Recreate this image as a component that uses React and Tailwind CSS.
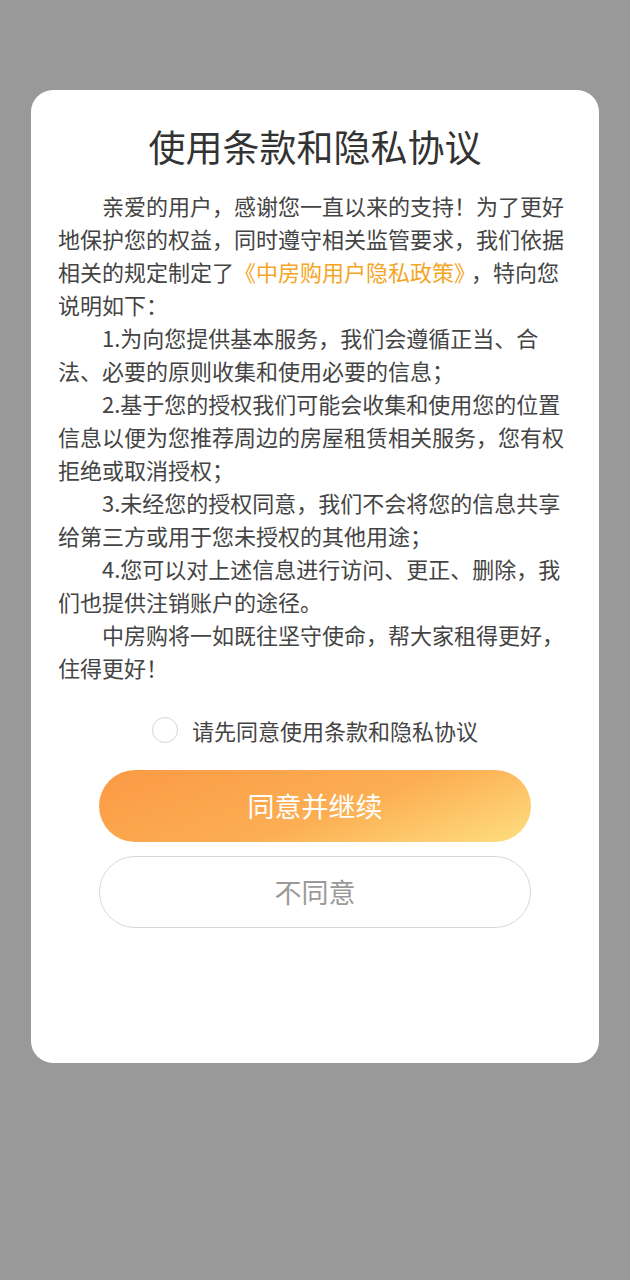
export default function App() {
  const font = { fontFamily: '"Noto Sans CJK SC", "Noto Sans", sans-serif' }
  return (
    <div className="min-h-[1280px] w-full bg-[#999999] pt-[90px]" style={font}>
      <div className="mx-[31px] rounded-[22px] bg-white px-[27px] pt-[31px] pb-[135px]">
        <h1 className="text-center text-[37px] leading-[50px] font-normal text-[#333333]">使用条款和隐私协议</h1>

        <div className="mt-[18px] text-[22px] leading-[33px] text-[#444444]">
          <p className="indent-[2em]">
            亲爱的用户，感谢您一直以来的支持！为了更好地保护您的权益，同时遵守相关监管要求，我们依据相关的规定制定了<span className="text-[#f5a524]">《中房购用户隐私政策》</span><span className="ml-[6px]">，特向您</span><br />说明如下：
          </p>
          <p className="indent-[2em]">1.为向您提供基本服务，我们会遵循正当、合法、必要的原则收集和使用必要的信息；</p>
          <p className="indent-[2em]">2.基于您的授权我们可能会收集和使用您的位置信息以便为您推荐周边的房屋租赁相关服务，您有权拒绝或取消授权；</p>
          <p className="indent-[2em]">3.未经您的授权同意，我们不会将您的信息共享给第三方或用于您未授权的其他用途；</p>
          <p className="indent-[2em]">4.您可以对上述信息进行访问、更正、删除，我们也提供注销账户的途径。</p>
          <p className="indent-[2em]">中房购将一如既往坚守使命，帮大家租得更好，住得更好！</p>
        </div>

        <div className="mt-[31px] flex items-center justify-center gap-[14px]">
          <span className="h-[26px] w-[26px] rounded-full border border-[#d6d6d6] bg-white" />
          <span className="text-[22px] leading-[30px] text-[#444444]">请先同意使用条款和隐私协议</span>
        </div>

        <div className="mt-[25px] flex flex-col items-center gap-[14px]">
          <button className="h-[72px] w-[432px] rounded-full bg-[linear-gradient(160deg,#fb9a44_0%,#fcae52_55%,#fedf80_100%)] text-[27px] text-white">
            同意并继续
          </button>
          <button className="h-[72px] w-[432px] rounded-full border border-[#d9d9d9] bg-white text-[27px] text-[#9a9a9a]">
            不同意
          </button>
        </div>
      </div>
    </div>
  )
}
